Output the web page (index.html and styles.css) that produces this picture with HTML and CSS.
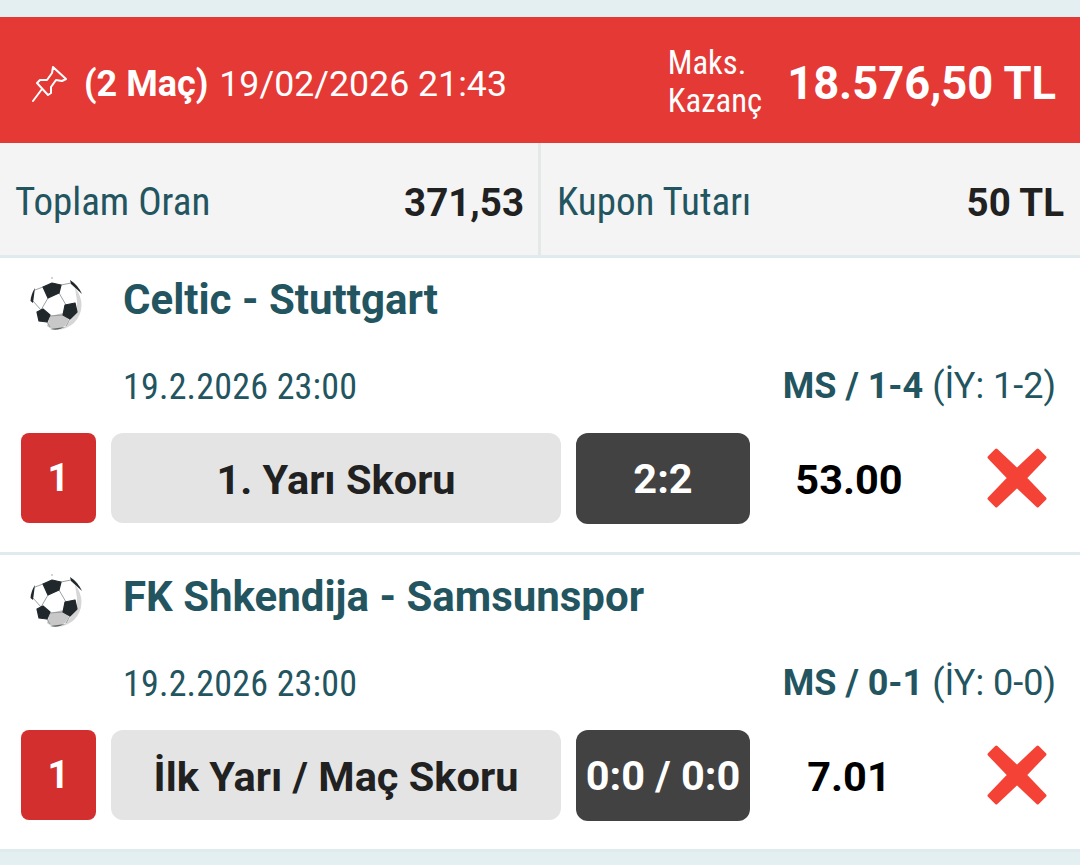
FILE: index.html
```html
<!DOCTYPE html>
<html lang="tr">
  <head>
    <meta charset="UTF-8" />
    <meta name="viewport" content="width=device-width, initial-scale=1.0" />
    <title>Kupon</title>
    <link rel="stylesheet" href="styles.css">
  </head>
  <body>
    <svg class="defs" width="0" height="0" aria-hidden="true">
      <defs>
        <symbol id="ball" viewBox="0 0 56 56">
          <circle cx="26.500" cy="27.500" r="25.500" fill="#fff"/>
          <path d="M45 11 A25.500 25.500 0 0 1 44 46 Q38 51 30 53 Q38 48 42 41 L47 35 L47 24 Z" fill="#d6d6d6"/>
          <path d="M20 39 L33 36 L39 43 L35 49 L28 53 Q22 53 17 49 Z" fill="#c8c8c8"/>
          <path d="M18 21 L11 33 M29 16 L36 28 M11 33 L3 24 M13 10 L5 13 M31 8 L41 6 M20 39 L33 38 M17 45 L20 50 M40 42 L36 49" stroke="#8f9598" stroke-width="0.900" fill="none"/>
          <path d="M13 10 L22 6 L31 8 L29 16 L18 21 Z" fill="#20282c" stroke="#20282c" stroke-width="1.200" stroke-linejoin="round"/>
          <path d="M35 28 L45 26 L47 35 L40 42 L33 38 Z" fill="#20282c" stroke="#20282c" stroke-width="1.200" stroke-linejoin="round"/>
          <path d="M7 35 L13 32 L20 38 L17 45 L9 44 Z" fill="#20282c" stroke="#20282c" stroke-width="1.200" stroke-linejoin="round"/>
          <path d="M40 3 Q48 8 52 17 L41 7 Z" fill="#20282c"/>
          <path d="M5 11 L3 26 L0.500 24 Q1 17 5 11 Z" fill="#20282c"/>
          <path d="M20 52 Q28 54 35 50 Q28 51 20 52 Z" fill="#5f6467"/>
          <circle cx="22" cy="1" r="0.800" fill="#9aa0a3"/>
        </symbol>
        <symbol id="cross" viewBox="0 0 60 60">
          <path d="M10 3 L30 22 L50 3 L57 10 L38 30 L57 50 L50 57 L30 38 L10 57 L3 50 L22 30 L3 10 Z" fill="#f44336" stroke="#f44336" stroke-width="3" stroke-linejoin="round"/>
        </symbol>
      </defs>
    </svg>

    <div class="top-strip"></div>

    <!-- Kupon basligi -->
    <header class="coupon-head">
      <div class="coupon-info">
        <svg class="pin" viewBox="0 0 36 38" fill="none" stroke="#fff" stroke-width="2" stroke-linejoin="round" stroke-linecap="round">
          <path d="M21 2 L34 14 L30 16 L24 15 L19 22 L19 28 L16 30 L5 18 L8 15 L15 15 L20 8 Z"/>
          <path d="M10 24 L1 36"/>
        </svg>
        <span><b>(2 Maç)</b> <span class="coupon-date">19/02/2026 21:43</span></span>
      </div>
      <div class="max-win">
        <span class="max-label">Maks.<br />Kazanç</span>
        <strong>18.576,50 TL</strong>
      </div>
    </header>

    <section class="summary">
      <div class="summary-cell">
        <span class="summary-label">Toplam Oran</span>
        <strong>371,53</strong>
      </div>
      <div class="summary-cell">
        <span class="summary-label">Kupon Tutarı</span>
        <strong>50 TL</strong>
      </div>
    </section>

    <!-- Maclar -->
    <article class="match">
      <div class="match-title">
        <svg class="ball"><use href="#ball"/></svg>
        <h2>Celtic - Stuttgart</h2>
      </div>
      <div class="match-meta">
        <span class="match-date">19.2.2026 23:00</span>
        <span><b>MS / 1-4</b> (İY: 1-2)</span>
      </div>
      <div class="bet">
        <div class="bet-no">1</div>
        <div class="bet-name">1. Yarı Skoru</div>
        <div class="bet-pick">2:2</div>
        <div class="bet-odd">53.00</div>
        <svg class="bet-status"><use href="#cross"/></svg>
      </div>
    </article>

    <article class="match">
      <div class="match-title">
        <svg class="ball"><use href="#ball"/></svg>
        <h2>FK Shkendija - Samsunspor</h2>
      </div>
      <div class="match-meta">
        <span class="match-date">19.2.2026 23:00</span>
        <span><b>MS / 0-1</b> (İY: 0-0)</span>
      </div>
      <div class="bet">
        <div class="bet-no">1</div>
        <div class="bet-name">İlk Yarı / Maç Skoru</div>
        <div class="bet-pick">0:0 / 0:0</div>
        <div class="bet-odd">7.01</div>
        <svg class="bet-status"><use href="#cross"/></svg>
      </div>
    </article>
  </body>
</html>
```

FILE: styles.css
```css
* {
  box-sizing: border-box;
  margin: 0;
  padding: 0;
}

body {
  font-family: Roboto, sans-serif;
  background-color: #e4eff1;
  color: #235560;
  width: 1080px;
  height: 865px;
  overflow: hidden;
}

.defs {
  position: absolute;
}

.top-strip {
  height: 17px;
}

.coupon-head {
  height: 126px;
  background-color: #e53935;
  color: #fff;
  display: flex;
  align-items: center;
  justify-content: space-between;
  padding: 7px 24px 0 32px;
}

.coupon-info {
  display: flex;
  align-items: center;
  gap: 16px;
  font-size: 36px;
}

.coupon-date {
  margin-left: 2px;
  font-size: 35.7px;
}

.pin {
  width: 36px;
  height: 38px;
}

.max-win {
  display: flex;
  align-items: center;
  gap: 25px;
}

.max-label {
  font-size: 32.7px;
  line-height: 38px;
  font-stretch: 75%;
  margin-top: -3px;
}

.max-win strong {
  font-size: 45.3px;
  font-weight: 700;
}

.summary {
  height: 115px;
  background-color: #f4f4f4;
  border-bottom: 3px solid #e0ebee;
  display: flex;
}

.summary-cell {
  width: 539px;
  display: flex;
  align-items: center;
  justify-content: space-between;
  padding: 6px 16px 0;
}

.summary-cell:first-child {
  width: 541px;
  border-right: 3px solid #e4e8e9;
  padding: 6px 14px 0 15px;
}

.summary-label {
  font-size: 39px;
  font-stretch: 75%;
}

.summary-cell strong {
  font-size: 38.5px;
  color: #212121;
}

.match {
  height: 297px;
  background-color: #fff;
  border-bottom: 3px solid #e0ebee;
  padding: 0 24px 0 21px;
}

.match-title {
  display: flex;
  align-items: center;
  height: 86px;
  padding-left: 9px;
  gap: 37px;
}

.ball {
  width: 56px;
  height: 56px;
  margin-top: 8px;
}

.match-title h2 {
  font-size: 42px;
  font-weight: 700;
  margin-bottom: 4px;
}

.match-meta {
  display: flex;
  justify-content: space-between;
  align-items: center;
  height: 44px;
  margin-top: 20px;
  padding-left: 102px;
  font-size: 36px;
}

.match-date {
  font-size: 36px;
  font-stretch: 87%;
  letter-spacing: 0.2px;
  padding-top: 1px;
}

.bet {
  display: flex;
  align-items: center;
  margin-top: 24px;
  height: 92px;
}

.bet-no {
  width: 75px;
  height: 90px;
  background-color: #d32f2f;
  color: #fff;
  border-radius: 8px;
  display: flex;
  align-items: center;
  justify-content: center;
  font-size: 38px;
  font-weight: 700;
}

.bet-name {
  width: 450px;
  height: 90px;
  margin-left: 15px;
  padding-top: 2px;
  background-color: #e4e4e4;
  color: #212121;
  border-radius: 12px;
  display: flex;
  align-items: center;
  justify-content: center;
  font-size: 41.5px;
  font-weight: 700;
}

.bet-pick {
  width: 174px;
  height: 91px;
  margin-left: 15px;
  background-color: #424242;
  color: #fff;
  border-radius: 12px;
  display: flex;
  align-items: center;
  justify-content: center;
  font-size: 41.5px;
  font-weight: 700;
  white-space: nowrap;
}

.bet-odd {
  width: 198px;
  padding-top: 2px;
  text-align: center;
  color: #000;
  font-size: 41.5px;
  font-weight: 700;
}

.bet-status {
  width: 62px;
  height: 62px;
  margin-left: 38px;
}
```
